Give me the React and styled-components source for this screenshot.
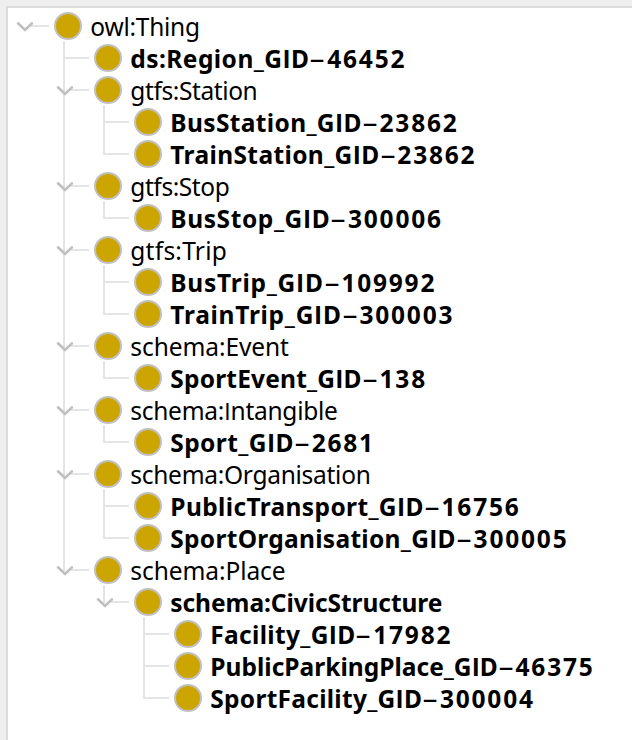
import React from "react";
import styled, { createGlobalStyle } from "styled-components";

const GlobalStyle = createGlobalStyle`
  * { box-sizing: border-box; }
  body { margin: 0; background: #eeeeee; }
`;

const Window = styled.main`
  height: 740px;
  padding: 6px 0 0 6px;
  overflow: hidden;
  background: #eeeeee;
`;

const Panel = styled.section`
  height: 100%;
  padding: 2px 0 0 6px;
  border: solid #dcdcdc;
  border-width: 2px 0 0 2px;
  background: #ffffff;
`;

const Tree = styled.ul`
  margin: 0;
  padding: 0;
  list-style: none;
`;

const Subtree = styled(Tree)`
  margin-top: -1px;
  padding: 1px 0 0 40px;
  background: linear-gradient(#e4e4e4, #e4e4e4) 49px 0 / 2px 1px no-repeat;
`;

const Item = styled.li`
  background: linear-gradient(#e4e4e4, #e4e4e4) 9px 0 / 2px
    ${({ $rail }) => ($rail === "through" ? "100%" : $rail === "end" ? "17px" : "0")}
    no-repeat;
`;

const Row = styled.div`
  display: flex;
  align-items: center;
  height: 32px;
`;

const Connector = styled.svg`
  flex: none;
  width: 40px;
  height: 32px;
`;

const ClassDot = styled.span`
  flex: none;
  width: 28px;
  height: 28px;
  border: 2px solid #c0c0c0;
  border-radius: 50%;
  background: #cda500;
`;

const Label = styled.span`
  display: flex;
  margin: 1px 0 0 8.3px;
  font: ${({ $bold }) => ($bold ? 700 : 400)} 24.5px/32px "Noto Sans", sans-serif;
  color: #000000;
  white-space: pre;
`;

const Name = styled.span`
  letter-spacing: ${({ $spacing }) => $spacing}px;
`;

const CapitalI = styled.span`
  font-family: "Open Sans", sans-serif;
`;

const Dash = styled.span`
  width: 17.8px;
  font-weight: 500;
  text-align: center;
  transform: translateX(-0.8px) scaleX(2.05);
`;

const Count = styled.span`
  letter-spacing: 1.79px;
`;

const tree = {
  name: "owl:Thing", spacing: -0.25, children: [
    { name: "ds:Region_GID", count: "46452", spacing: 0.45 },
    { name: "gtfs:Station", spacing: -0.4, children: [
      { name: "BusStation_GID", count: "23862", spacing: 0.36 },
      { name: "TrainStation_GID", count: "23862", spacing: 0.38 },
    ] },
    { name: "gtfs:Stop", spacing: -0.42, children: [
      { name: "BusStop_GID", count: "300006", spacing: 0.6 },
    ] },
    { name: "gtfs:Trip", spacing: 0.25, children: [
      { name: "BusTrip_GID", count: "109992", spacing: 0.75 },
      { name: "TrainTrip_GID", count: "300003", spacing: 0.73 },
    ] },
    { name: "schema:Event", spacing: -0.08, children: [
      { name: "SportEvent_GID", count: "138", spacing: 0.2 },
    ] },
    { name: "schema:Intangible", spacing: -0.28, children: [
      { name: "Sport_GID", count: "2681", spacing: 0.42 },
    ] },
    { name: "schema:Organisation", spacing: -0.28, children: [
      { name: "PublicTransport_GID", count: "16756", spacing: 0.37 },
      { name: "SportOrganisation_GID", count: "300005", spacing: 0.29 },
    ] },
    { name: "schema:Place", spacing: -0.08, children: [
      { name: "schema:CivicStructure", bold: true, spacing: -0.06, children: [
        { name: "Facility_GID", count: "17982", spacing: 0.33 },
        { name: "PublicParkingPlace_GID", count: "46375", spacing: 0.02 },
        { name: "SportFacility_GID", count: "300004", spacing: 0.28 },
      ] },
    ] },
  ],
};

function NodeName({ name, spacing }) {
  return (
    <Name $spacing={spacing}>
      {name.split("I").map((part, i) => (
        <React.Fragment key={i}>
          {i > 0 && <CapitalI>I</CapitalI>}
          {part}
        </React.Fragment>
      ))}
    </Name>
  );
}

function TreeNode({ node, rail }) {
  const expandable = Boolean(node.children);
  return (
    <Item $rail={rail}>
      <Row>
        <Connector viewBox="0 0 40 32" aria-hidden="true">
          <path d={expandable ? "M17 16H35" : "M11 16H35"} stroke="#e4e4e4" strokeWidth="2" />
          {expandable && (
            <path d="M4 13.3L11 19.9L18 13.3" fill="none" stroke="#c0c0c0" strokeWidth="2.6" strokeLinecap="round" />
          )}
        </Connector>
        <ClassDot />
        <Label $bold={node.bold || Boolean(node.count)}>
          <NodeName name={node.name} spacing={node.spacing} />
          {node.count && <Dash>-</Dash>}
          {node.count && <Count>{node.count}</Count>}
        </Label>
      </Row>
      {expandable && (
        <Subtree>
          {node.children.map((child, i) => (
            <TreeNode
              key={child.name}
              node={child}
              rail={i === node.children.length - 1 ? "end" : "through"}
            />
          ))}
        </Subtree>
      )}
    </Item>
  );
}

export default function App() {
  return (
    <Window>
      <GlobalStyle />
      <Panel>
        <Tree>
          <TreeNode node={tree} rail="none" />
        </Tree>
      </Panel>
    </Window>
  );
}
